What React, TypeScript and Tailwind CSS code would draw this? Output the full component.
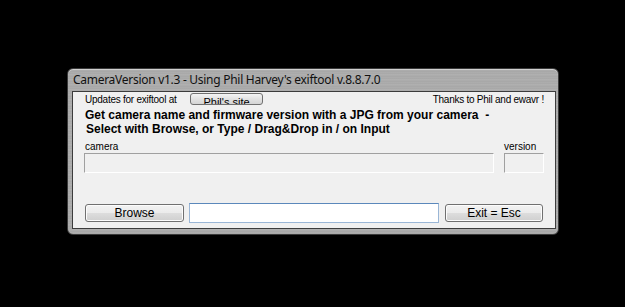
import React from "react";

const sans = { fontFamily: '"Liberation Sans", Arial, sans-serif' } as const;

export default function App() {
  return (
    <div className="w-[625px] h-[307px] bg-black pt-[68px] pl-[67px]">
      <div className="w-[492px] h-[167px] rounded-[6px] border border-[#3a3a3a] flex flex-col pl-[4px] bg-[repeating-linear-gradient(180deg,#a9a9a9_0px,#b6b6b6_1px,#a2a2a2_2px,#aeaeae_3px,#a7a7a7_5px)] shadow-[inset_0_1px_0_#d0d0d0]">
        <div
          className="h-[22px] flex items-center pl-[1px] text-[12px] tracking-[-0.28px] text-[#111]"
          style={{ fontFamily: '"Noto Sans", "Open Sans", sans-serif' }}
        >
          CameraVersion v1.3 - Using Phil Harvey's exiftool v.8.8.7.0
        </div>
        <div
          className="w-[484px] h-[138px] border border-[#3c3c3c] bg-[#f0f0f0] flex flex-col text-black"
          style={sans}
        >
          <div className="mt-[1px] h-[12px] flex items-center pl-[12px] pr-[11px] text-[10px] tracking-[-0.25px]">
            <span className="w-[105px]">Updates for exiftool at</span>
            <div className="w-[73px] h-[12px] rounded-[3px] border border-[#707070] bg-[linear-gradient(180deg,#f4f4f4,#e2e2e2_50%,#d4d4d4)] overflow-hidden flex justify-center tracking-normal">
              <span className="text-[11px] leading-[11px] mt-[3px]">Phil's site</span>
            </div>
            <span className="ml-auto">Thanks to Phil and ewavr !</span>
          </div>
          <div className="mt-[3px] pl-[12px] text-[12px] leading-[14px] font-bold whitespace-pre">
            <div>Get camera name and firmware version with a JPG from your camera  -</div>
            <div className="pl-[1px]">Select with Browse, or Type / Drag&amp;Drop in / on Input</div>
          </div>
          <div className="mt-[5px] h-[11px] flex items-center text-[10px] leading-[11px]">
            <span className="ml-[12px] w-[419px]">camera</span>
            <span>version</span>
          </div>
          <div className="mt-[1px] flex pl-[11px] gap-[10px]">
            <div className="w-[410px] h-[20px] border border-t-[#a0a0a0] border-l-[#a0a0a0] border-b-white border-r-white bg-[#f0f0f0]" />
            <div className="w-[40px] h-[20px] border border-t-[#a0a0a0] border-l-[#a0a0a0] border-b-white border-r-white bg-[#f0f0f0]" />
          </div>
          <div className="mt-[30px] flex items-center pl-[12px] h-[20px]">
            <div className="w-[99px] h-[18px] rounded-[3px] border border-[#707070] bg-[linear-gradient(180deg,#f2f2f2,#ebebeb_50%,#dddddd_50%,#cfcfcf)] flex items-center justify-center text-[12px] shadow-[inset_0_0_0_1px_#fcfcfc]">
              Browse
            </div>
            <div className="ml-[5px] w-[250px] h-[20px] border border-[#9ab6d6] border-t-[#5b88bb] bg-white" />
            <div className="ml-[6px] w-[98px] h-[18px] rounded-[3px] border border-[#707070] bg-[linear-gradient(180deg,#f2f2f2,#ebebeb_50%,#dddddd_50%,#cfcfcf)] flex items-center justify-center text-[12px] shadow-[inset_0_0_0_1px_#fcfcfc]">
              Exit = Esc
            </div>
          </div>
        </div>
      </div>
    </div>
  );
}
